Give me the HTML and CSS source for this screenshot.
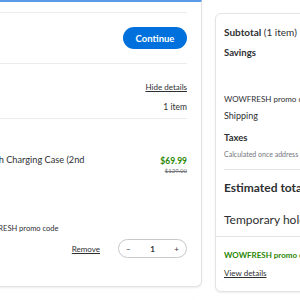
FILE: index.html
```html
<!DOCTYPE html>
<html lang="en">
<head>
<meta charset="utf-8">
<title>Checkout</title>
<link rel="stylesheet" href="styles.css">
</head>
<body>
<div class="page">
  <div class="left">
    <section class="card main-card">
      <div class="prev-tail"></div>
      <div class="continue-row">
        <button class="btn-continue" type="button">Continue</button>
      </div>
      <div class="details-head">
        <a class="link hide-link" href="#">Hide details</a>
        <div class="count">1 item</div>
      </div>
      <div class="item">
        <div class="item-row">
          <div class="item-info">
            <div class="item-name">Apple AirPods with Charging Case (2nd Generation)</div>
          </div>
          <div class="item-price">
            <div class="now">$69.99</div>
            <div class="was">$129.00</div>
          </div>
        </div>
        <div class="item-promo">Saved with WOWFRESH promo code</div>
        <div class="item-actions">
          <a class="link remove" href="#">Remove</a>
          <div class="stepper">
            <span class="step">&minus;</span>
            <span class="qty">1</span>
            <span class="step">+</span>
          </div>
        </div>
      </div>
    </section>
    <section class="card next-card"></section>
  </div>
  <aside class="card summary">
    <div class="row subtotal"><b>Subtotal</b> (1 item)</div>
    <div class="row savings"><b>Savings</b></div>
    <div class="row promo-line">WOWFRESH promo code</div>
    <div class="row shipping">Shipping</div>
    <div class="row taxes"><b>Taxes</b></div>
    <div class="row calc">Calculated once address is provided</div>
    <div class="divider inset"></div>
    <div class="row est">Estimated total</div>
    <div class="row hold">Temporary hold</div>
    <div class="divider full"></div>
    <div class="row green-promo">WOWFRESH promo code applied</div>
    <a class="row link view" href="#">View details</a>
  </aside>
</div>
</body>
</html>
```
FILE: styles.css
```css
html, body {
  margin: 0;
  padding: 0;
  overflow: hidden;
  background: #ffffff;
}
body {
  font-family: Lato, "Noto Sans", sans-serif;
  color: #2e2f32;
}
.page {
  display: flex;
  align-items: flex-start;
  gap: 13px;
  margin-left: -200px;
  width: 700px;
}
.left {
  width: 402px;
  flex: none;
  display: flex;
  flex-direction: column;
  gap: 13px;
}
.card {
  background: #fff;
  border: 1px solid #e3e4e5;
  border-radius: 6px;
  box-shadow: 0 1px 2px rgba(0,0,0,0.08);
  box-sizing: border-box;
}
.main-card {
  border-top: 2px solid #5b9be6;
  border-top-right-radius: 0;
  border-top-left-radius: 0;
  padding: 0 14px 28px 14px;
}
.prev-tail {
  height: 10px;
  border-bottom: 1px solid #ececec;
}
.continue-row {
  height: 50px;
  display: flex;
  align-items: center;
  justify-content: flex-end;
  border-bottom: 1px solid #ececec;
}
.btn-continue {
  width: 64px;
  height: 22px;
  border: 0;
  border-radius: 11px;
  background: #0071dc;
  color: #fff;
  font-family: inherit;
  font-weight: 700;
  font-size: 9.5px;
  padding: 0;
}
.details-head {
  padding: 17px 0 5px;
  display: flex;
  flex-direction: column;
  align-items: flex-end;
  gap: 8px;
  border-bottom: 1px solid #ececec;
}
.link {
  color: #2e2f32;
  text-decoration: underline;
}
.hide-link {
  font-size: 8px;
  line-height: 12px;
}
.count {
  font-size: 8.5px;
  line-height: 12px;
}
.item {
  padding-top: 35px;
}
.item-row {
  display: flex;
  justify-content: space-between;
  height: 68px;
}
.item-info {
  margin-left: 112px;
  width: 170px;
}
.item-name {
  font-size: 9.2px;
  line-height: 12px;
}
.item-price {
  text-align: right;
  padding-top: 1px;
}
.now {
  color: #2a8703;
  font-weight: 700;
  font-size: 8.5px;
  line-height: 12px;
}
.was {
  color: #74767c;
  font-size: 6px;
  line-height: 8px;
  text-decoration: line-through;
}
.item-promo {
  margin-left: 120px;
  margin-top: 1px;
  font-size: 7.5px;
  line-height: 12px;
}
.item-actions {
  margin-top: 4px;
  display: flex;
  justify-content: flex-end;
  align-items: center;
  gap: 18px;
}
.remove {
  font-size: 8px;
}
.stepper {
  width: 69px;
  height: 19px;
  box-sizing: border-box;
  border: 1px solid #c7c8ca;
  border-radius: 10px;
  display: flex;
  align-items: center;
  justify-content: space-between;
  padding: 0 7px;
  font-size: 8px;
}
.qty {
  font-weight: 700;
}
.next-card {
  height: 40px;
}
.summary {
  margin-top: 13px;
  width: 220px;
  flex: none;
  padding: 12px 8px 12px 8px;
  font-size: 9.5px;
}
.row {
  display: block;
  line-height: 12px;
}
.subtotal { font-size: 10px; }
.savings { margin-top: 9px; }
.promo-line { margin-top: 34px; font-size: 8px; }
.shipping { margin-top: 5px; font-size: 9px; }
.taxes { margin-top: 10px; }
.calc { margin-top: 5px; font-size: 7px; line-height: 10px; color: #74767c; }
.divider.inset { margin-top: 10px; height: 1px; background: #e3e4e5; }
.est { margin-top: 10px; font-size: 12px; line-height: 16px; font-weight: 700; }
.hold { margin-top: 16px; font-size: 12px; line-height: 16px; }
.divider.full { margin: 8px -8px 0; height: 1px; background: #e3e4e5; }
.green-promo { margin-top: 12px; font-size: 8px; font-weight: 700; color: #2a8703; }
.view { margin-top: 6px; font-size: 8px; }
```
